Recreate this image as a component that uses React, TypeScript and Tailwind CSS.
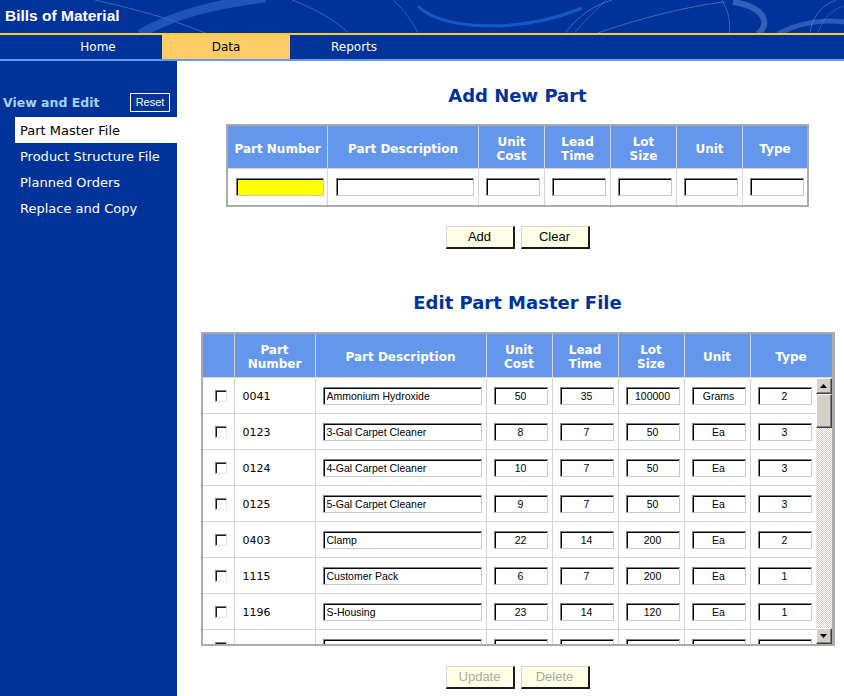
import React from "react";

const verdana = "font-['DejaVu_Sans',Verdana,sans-serif]";
const arial = "font-['Liberation_Sans',Arial,sans-serif]";

type Part = {
  num: string;
  desc: string;
  cost: string;
  lead: string;
  lot: string;
  unit: string;
  type: string;
};

const PARTS: Part[] = [
  { num: "0041", desc: "Ammonium Hydroxide", cost: "50", lead: "35", lot: "100000", unit: "Grams", type: "2" },
  { num: "0123", desc: "3-Gal Carpet Cleaner", cost: "8", lead: "7", lot: "50", unit: "Ea", type: "3" },
  { num: "0124", desc: "4-Gal Carpet Cleaner", cost: "10", lead: "7", lot: "50", unit: "Ea", type: "3" },
  { num: "0125", desc: "5-Gal Carpet Cleaner", cost: "9", lead: "7", lot: "50", unit: "Ea", type: "3" },
  { num: "0403", desc: "Clamp", cost: "22", lead: "14", lot: "200", unit: "Ea", type: "2" },
  { num: "1115", desc: "Customer Pack", cost: "6", lead: "7", lot: "200", unit: "Ea", type: "1" },
  { num: "1196", desc: "S-Housing", cost: "23", lead: "14", lot: "120", unit: "Ea", type: "1" },
  { num: "1200", desc: "Spray Nozzle", cost: "4", lead: "7", lot: "500", unit: "Ea", type: "2" },
  { num: "1318", desc: "Trigger Assembly", cost: "5", lead: "14", lot: "500", unit: "Ea", type: "2" },
];

const MENU = ["Part Master File", "Product Structure File", "Planned Orders", "Replace and Copy"];

function Field({
  value = "",
  width,
  left,
  yellow,
}: {
  value?: string;
  width: string;
  left?: boolean;
  yellow?: boolean;
}) {
  return (
    <input
      readOnly
      value={value}
      className={`h-[18px] ${width} border border-[#c8c8c8] border-t-[#808080] border-l-[#808080] shadow-[inset_1px_1px_0_#000] ${
        yellow ? "bg-[#ffff00]" : "bg-white"
      } px-[3px] pt-px text-[10.5px] text-black outline-none ${arial} ${left ? "text-left" : "text-center"}`}
    />
  );
}

function ClassicButton({ label, disabled }: { label: string; disabled?: boolean }) {
  return (
    <button
      className={`h-[23px] w-[69px] border border-t-[#d0d0d0] border-l-[#d0d0d0] border-r-2 border-b-2 border-r-[#1a1a1a] border-b-[#1a1a1a] bg-[#ffffe6] text-[13px] ${arial} ${
        disabled ? "text-[#a8a8a8]" : "text-black"
      }`}
    >
      {label}
    </button>
  );
}

function HeadCell({ children }: { children?: React.ReactNode }) {
  return (
    <div className="flex items-center justify-center bg-[#6496eb] pt-[3px] text-center text-[12px] font-bold leading-[14px] text-white">
      {children}
    </div>
  );
}

function Checkbox() {
  return (
    <span className="block h-[12px] w-[12px] border border-[#e4e4e4] border-t-[#808080] border-l-[#808080] bg-white shadow-[inset_1px_1px_0_#1a1a1a]" />
  );
}

function Arrow({ up }: { up?: boolean }) {
  return (
    <div className="flex h-[16px] w-[16px] items-center justify-center border border-t-[#ffffff] border-l-[#ffffff] border-b-[#404040] border-r-[#404040] bg-[#d4d0c8] shadow-[inset_-1px_-1px_0_#808080]">
      <svg width="7" height="4" viewBox="0 0 7 4">
        <polygon points={up ? "3.5,0 7,4 0,4" : "0,0 7,0 3.5,4"} fill="#000" />
      </svg>
    </div>
  );
}

function Scrollbar() {
  return (
    <div className="flex h-full w-[16px] shrink-0 flex-col bg-[repeating-conic-gradient(#d4d0c8_0%_25%,#ffffff_0%_50%)] bg-[length:2px_2px]">
      <Arrow up />
      <div className="h-[34px] w-[16px] border border-t-[#ffffff] border-l-[#ffffff] border-b-[#404040] border-r-[#404040] bg-[#d4d0c8] shadow-[inset_-1px_-1px_0_#808080]" />
      <div className="flex-1" />
      <Arrow />
    </div>
  );
}

function Swirls() {
  return (
    <svg className="absolute inset-0" width="844" height="33" viewBox="0 0 844 33" fill="none">
      <path d="M95 0 C130 8 170 18 205 33" stroke="#6f94dc" strokeOpacity="0.55" />
      <path d="M140 34 C175 14 215 4 265 -2" stroke="#2f62c8" strokeOpacity="0.7" strokeWidth="9" />
      <path d="M292 0 C318 10 338 22 348 33" stroke="#6f94dc" strokeOpacity="0.5" />
      <path d="M393 0 C404 10 412 21 418 33" stroke="#6f94dc" strokeOpacity="0.45" />
      <path d="M418 6 C440 30 520 34 582 8" stroke="#1f6ad8" strokeOpacity="0.7" strokeWidth="3" />
      <path d="M565 33 C578 16 594 5 612 0" stroke="#6f94dc" strokeOpacity="0.55" />
      <path d="M574 33 C588 18 598 8 606 0" stroke="#6f94dc" strokeOpacity="0.45" />
      <path d="M598 33 C640 18 690 6 724 2" stroke="#6f94dc" strokeOpacity="0.55" />
      <path d="M722 0 C728 10 731 22 729 33" stroke="#6f94dc" strokeOpacity="0.5" />
      <path d="M733 2 C762 6 772 22 758 34" stroke="#5b84d6" strokeOpacity="0.55" strokeWidth="6" />
      <path d="M778 34 C800 22 825 19 846 22" stroke="#5b84d6" strokeOpacity="0.5" strokeWidth="5" />
      <path d="M810 33 C812 18 820 6 836 0" stroke="#6f94dc" strokeOpacity="0.5" />
      <path d="M818 33 C822 20 830 10 844 6" stroke="#6f94dc" strokeOpacity="0.4" />
    </svg>
  );
}

function AddTable() {
  return (
    <div className="border-2 border-[#ababab]">
      <div className="grid grid-cols-[99px_150px_65px_65px_65px_65px_64px] grid-rows-[42px_36px] gap-px bg-[#d4d4d4]">
        <HeadCell>Part Number</HeadCell>
        <HeadCell>Part Description</HeadCell>
        <HeadCell>
          Unit
          <br />
          Cost
        </HeadCell>
        <HeadCell>
          Lead
          <br />
          Time
        </HeadCell>
        <HeadCell>
          Lot
          <br />
          Size
        </HeadCell>
        <HeadCell>Unit</HeadCell>
        <HeadCell>Type</HeadCell>
        <div className="flex items-center bg-white pl-[8px]">
          <Field width="w-[88px]" yellow />
        </div>
        <div className="flex items-center bg-white pl-[8px]">
          <Field width="w-[138px]" />
        </div>
        {[0, 1, 2, 3, 4].map((i) => (
          <div key={i} className="flex items-center bg-white pl-[7px]">
            <Field width="w-[54px]" />
          </div>
        ))}
      </div>
    </div>
  );
}

function EditTable() {
  return (
    <div className="border-2 border-r-[3px] border-[#ababab]">
      <div className="grid grid-cols-[31px_80px_170px_65px_65px_65px_65px_81px] grid-rows-[43px] gap-px bg-[#d4d4d4]">
        <HeadCell />
        <HeadCell>
          Part
          <br />
          Number
        </HeadCell>
        <HeadCell>Part Description</HeadCell>
        <HeadCell>
          Unit
          <br />
          Cost
        </HeadCell>
        <HeadCell>
          Lead
          <br />
          Time
        </HeadCell>
        <HeadCell>
          Lot
          <br />
          Size
        </HeadCell>
        <HeadCell>Unit</HeadCell>
        <HeadCell>Type</HeadCell>
      </div>
      <div className="h-px bg-[#d4d4d4]" />
      <div className="flex h-[266px]">
        <div className="w-[613px] overflow-hidden">
          <div className="grid grid-cols-[31px_80px_170px_65px_65px_65px_65px_65px] auto-rows-[35px] gap-px bg-[#d4d4d4]">
            {PARTS.map((p) => (
              <React.Fragment key={p.num}>
                <div className="flex items-center bg-white pl-[12px]">
                  <Checkbox />
                </div>
                <div className={`flex items-center bg-white pl-[8px] pt-[3px] text-[11px] text-black ${verdana}`}>
                  {p.num}
                </div>
                <div className="flex items-center bg-white pl-[7px]">
                  <Field value={p.desc} width="w-[159px]" left />
                </div>
                <div className="flex items-center bg-white pl-[7px]">
                  <Field value={p.cost} width="w-[54px]" />
                </div>
                <div className="flex items-center bg-white pl-[7px]">
                  <Field value={p.lead} width="w-[54px]" />
                </div>
                <div className="flex items-center bg-white pl-[7px]">
                  <Field value={p.lot} width="w-[54px]" />
                </div>
                <div className="flex items-center bg-white pl-[7px]">
                  <Field value={p.unit} width="w-[54px]" />
                </div>
                <div className="flex items-center bg-white pl-[7px]">
                  <Field value={p.type} width="w-[54px]" />
                </div>
              </React.Fragment>
            ))}
          </div>
        </div>
        <Scrollbar />
      </div>
    </div>
  );
}

export default function App() {
  return (
    <div className={`flex h-[696px] w-[844px] flex-col overflow-hidden bg-white ${verdana}`}>
      <header>
        <div className="relative flex h-[33px] items-center overflow-hidden bg-[#003399] pb-[2px]">
          <Swirls />
          <span className={`relative pl-[5px] text-[15.5px] font-bold text-white ${arial}`}>Bills of Material</span>
        </div>
        <div className="h-[2px] bg-[#ffcc33]" />
        <nav className="flex h-[24px] bg-[#003399] pl-[34px] text-[12px]">
          <div className="flex w-[128px] items-center justify-center text-white">Home</div>
          <div className="flex w-[128px] items-center justify-center bg-[#ffcc66] text-black">Data</div>
          <div className="flex w-[128px] items-center justify-center text-white">Reports</div>
        </nav>
        <div className="h-[2px] bg-[#6699ee]" />
      </header>

      <div className="flex flex-1">
        <aside className="w-[177px] shrink-0 bg-[#003399] pt-[32px]">
          <div className="flex h-[19px] items-center justify-between pl-[3px] pr-[7px]">
            <span className="pt-[2px] text-[12.5px] font-bold text-[#a6d2f2]">View and Edit</span>
            <button className={`h-[19px] w-[40px] border border-white text-[11px] text-white ${arial}`}>Reset</button>
          </div>
          <ul className="mt-[5px] pl-[15px]">
            {MENU.map((item, i) => (
              <li
                key={item}
                className={`flex h-[26px] items-center pl-[5px] pt-px text-[13px] ${i === 0 ? "bg-white text-black" : "text-white"}`}
              >
                {item}
              </li>
            ))}
          </ul>
        </aside>

        <main className="flex flex-1 flex-col items-center pl-[14px] pt-[24px]">
          <h1 className="text-[18px] font-bold leading-[22px] text-[#003399]">Add New Part</h1>
          <div className="mt-[17px]">
            <AddTable />
          </div>
          <div className="mt-[19px] flex gap-[6px]">
            <ClassicButton label="Add" />
            <ClassicButton label="Clear" />
          </div>

          <h1 className="mt-[43px] text-[18px] font-bold leading-[22px] text-[#003399]">Edit Part Master File</h1>
          <div className="mt-[18px]">
            <EditTable />
          </div>
          <div className="mt-[20px] flex gap-[6px]">
            <ClassicButton label="Update" disabled />
            <ClassicButton label="Delete" disabled />
          </div>
        </main>
      </div>
    </div>
  );
}
